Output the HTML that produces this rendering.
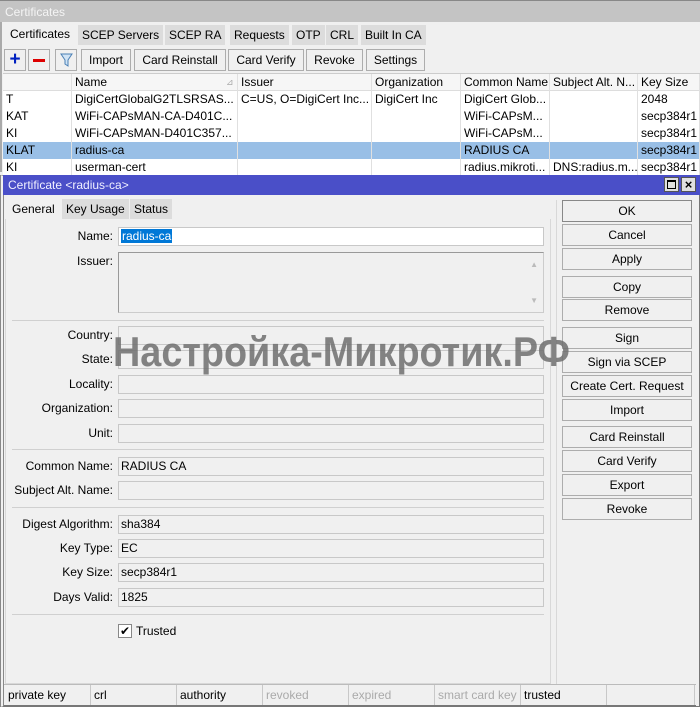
<!DOCTYPE html>
<html><head><meta charset="utf-8"><style>
*{box-sizing:border-box;margin:0;padding:0}
body{width:700px;height:707px;overflow:hidden;background:#f0f0f0;font-family:"Liberation Sans",sans-serif;font-size:12px;color:#000;position:relative}
.a{position:absolute}
.tab{position:absolute;top:25px;height:20px;background:#dcdcdc;padding:3px 4px 0;font-size:12px}
.tb{position:absolute;top:49px;height:22px;border:1px solid #adadad;background:#f0f0f0;text-align:center;line-height:20px}
.cell{position:absolute;height:17px;line-height:17px;padding-left:3px;white-space:nowrap;overflow:hidden;border-right:1px solid #e0e0e0}
.lbl{position:absolute;right:587px;text-align:right;height:18px;line-height:18px}
.inp{position:absolute;left:118px;width:426px;height:19px;border:1px solid #c8c8c8;background:#f0f0f0;line-height:17px;padding-left:2px}
.sep{position:absolute;left:12px;width:532px;height:1px;background:#d0d0d0}
.btn{position:absolute;left:562px;width:130px;height:22px;border:1px solid #adadad;background:#f0f0f0;text-align:center;line-height:20px}
.st{position:absolute;top:685px;height:20px;line-height:20px;padding-left:3px;border-right:1px solid #c8c8c8}
</style></head><body>
<div class="a" style="left:0;top:0;width:700px;height:22px;background:#c4c4c4;border-top:1px solid #888;color:#f4f4f4;padding:4px 0 0 5px;font-size:12px">Certificates</div>
<div class="a" style="left:0;top:22px;width:2px;height:150px;background:#aaa"></div>
<div class="tab" style="left:4px;top:23px;height:22px;background:#f0f0f0;padding-top:4px;left:6px">Certificates</div>
<div class="tab" style="left:78px">SCEP Servers</div>
<div class="tab" style="left:165px">SCEP RA</div>
<div class="tab" style="left:230px">Requests</div>
<div class="tab" style="left:292px">OTP</div>
<div class="tab" style="left:326px">CRL</div>
<div class="tab" style="left:361px">Built In CA</div>
<div class="tb" style="left:4px;width:22px"><span style="color:#0020c0;font-weight:bold;font-size:19px;line-height:19px">+</span></div>
<div class="tb" style="left:28px;width:22px"><div class="a" style="left:4px;top:9px;width:12px;height:3px;background:#d00"></div></div>
<div class="tb" style="left:55px;width:22px"><svg class="a" style="left:4px;top:3px" width="13" height="14"><path d="M1 1h11L8 7v6L5 11V7z" fill="#cfe3f5" stroke="#4a7fb5"/></svg></div>
<div class="tb" style="left:81px;width:50px">Import</div>
<div class="tb" style="left:134px;width:92px">Card Reinstall</div>
<div class="tb" style="left:228px;width:76px">Card Verify</div>
<div class="tb" style="left:306px;width:57px">Revoke</div>
<div class="tb" style="left:366px;width:59px">Settings</div>
<div class="a" style="left:3px;top:73px;width:697px;height:102px;background:#fff;border-top:1px solid #ccc"></div>
<div class="a" style="left:3px;top:74px;width:697px;height:17px;background:#f6f6f6;border-bottom:1px solid #ddd"></div>
<div class="a" style="left:3px;top:142px;width:697px;height:17px;background:#99bfe6"></div>
<div class="cell" style="left:3px;top:74px;width:69px"></div>
<div class="cell" style="left:72px;top:74px;width:166px">Name<span style="position:absolute;left:154px;color:#aaa;font-size:9px">&#8895;</span></div>
<div class="cell" style="left:238px;top:74px;width:134px">Issuer</div>
<div class="cell" style="left:372px;top:74px;width:89px">Organization</div>
<div class="cell" style="left:461px;top:74px;width:89px">Common Name</div>
<div class="cell" style="left:550px;top:74px;width:88px">Subject Alt. N...</div>
<div class="cell" style="left:638px;top:74px;width:62px">Key Size</div>

<div class="cell" style="left:3px;top:91px;width:69px">T</div><div class="cell" style="left:72px;top:91px;width:166px">DigiCertGlobalG2TLSRSAS...</div><div class="cell" style="left:238px;top:91px;width:134px">C=US, O=DigiCert Inc...</div><div class="cell" style="left:372px;top:91px;width:89px">DigiCert Inc</div><div class="cell" style="left:461px;top:91px;width:89px">DigiCert Glob...</div><div class="cell" style="left:550px;top:91px;width:88px"></div><div class="cell" style="left:638px;top:91px;width:62px">2048</div>
<div class="cell" style="left:3px;top:108px;width:69px">KAT</div><div class="cell" style="left:72px;top:108px;width:166px">WiFi-CAPsMAN-CA-D401C...</div><div class="cell" style="left:238px;top:108px;width:134px"></div><div class="cell" style="left:372px;top:108px;width:89px"></div><div class="cell" style="left:461px;top:108px;width:89px">WiFi-CAPsM...</div><div class="cell" style="left:550px;top:108px;width:88px"></div><div class="cell" style="left:638px;top:108px;width:62px">secp384r1</div>
<div class="cell" style="left:3px;top:125px;width:69px">KI</div><div class="cell" style="left:72px;top:125px;width:166px">WiFi-CAPsMAN-D401C357...</div><div class="cell" style="left:238px;top:125px;width:134px"></div><div class="cell" style="left:372px;top:125px;width:89px"></div><div class="cell" style="left:461px;top:125px;width:89px">WiFi-CAPsM...</div><div class="cell" style="left:550px;top:125px;width:88px"></div><div class="cell" style="left:638px;top:125px;width:62px">secp384r1</div>
<div class="cell" style="left:3px;top:142px;width:69px">KLAT</div><div class="cell" style="left:72px;top:142px;width:166px">radius-ca</div><div class="cell" style="left:238px;top:142px;width:134px"></div><div class="cell" style="left:372px;top:142px;width:89px"></div><div class="cell" style="left:461px;top:142px;width:89px">RADIUS CA</div><div class="cell" style="left:550px;top:142px;width:88px"></div><div class="cell" style="left:638px;top:142px;width:62px">secp384r1</div>
<div class="cell" style="left:3px;top:159px;width:69px">KI</div><div class="cell" style="left:72px;top:159px;width:166px">userman-cert</div><div class="cell" style="left:238px;top:159px;width:134px"></div><div class="cell" style="left:372px;top:159px;width:89px"></div><div class="cell" style="left:461px;top:159px;width:89px">radius.mikroti...</div><div class="cell" style="left:550px;top:159px;width:88px">DNS:radius.m...</div><div class="cell" style="left:638px;top:159px;width:62px">secp384r1</div>

<div class="a" style="left:0;top:175px;width:700px;height:532px;background:#f0f0f0;border:1px solid #777;border-left:4px double #888"></div>
<div class="a" style="left:3px;top:175px;width:697px;height:20px;background:#4a4fc8;color:#f0f0ff;padding:3px 0 0 5px">Certificate &lt;radius-ca&gt;</div>
<div class="a" style="left:664px;top:177px;width:15px;height:15px;background:#e0e0e0;border:1px solid #555"><div class="a" style="left:2px;top:2px;width:9px;height:9px;border:1px solid #000;border-top-width:2px"></div></div>
<div class="a" style="left:681px;top:177px;width:15px;height:15px;background:#e0e0e0;border:1px solid #555;text-align:center;line-height:13px;font-size:13px;font-weight:bold">×</div>
<div class="tab" style="left:8px;top:198px;height:22px;background:#f0f0f0;padding-top:4px">General</div>
<div class="tab" style="left:62px;top:199px">Key Usage</div>
<div class="tab" style="left:130px;top:199px">Status</div>
<div class="a" style="left:5px;top:219px;width:546px;height:465px;border:1px solid #d8d8d8;border-top:none"></div>

<div class="lbl" style="top:227px">Name:</div>
<div class="inp" style="top:227px;background:#fff"><span style="background:#0078d7;color:#fff;padding:0 1px">radius-ca</span></div>
<div class="lbl" style="top:252px">Issuer:</div>
<div class="inp" style="top:252px;height:61px;border-color:#999 #ccc #ccc #999"><span class="a" style="right:5px;top:3px;color:#bbb;font-size:8px">▲</span><span class="a" style="right:5px;bottom:3px;color:#bbb;font-size:8px">▼</span></div>
<div class="sep" style="top:320px"></div>
<div class="lbl" style="top:326px">Country:</div><div class="inp" style="top:326px"></div>
<div class="lbl" style="top:350px">State:</div><div class="inp" style="top:350px"></div>
<div class="lbl" style="top:375px">Locality:</div><div class="inp" style="top:375px"></div>
<div class="lbl" style="top:399px">Organization:</div><div class="inp" style="top:399px"></div>
<div class="lbl" style="top:424px">Unit:</div><div class="inp" style="top:424px"></div>
<div class="sep" style="top:449px"></div>
<div class="lbl" style="top:457px">Common Name:</div><div class="inp" style="top:457px">RADIUS CA</div>
<div class="lbl" style="top:481px">Subject Alt. Name:</div><div class="inp" style="top:481px"></div>
<div class="sep" style="top:507px"></div>
<div class="lbl" style="top:515px">Digest Algorithm:</div><div class="inp" style="top:515px">sha384</div>
<div class="lbl" style="top:539px">Key Type:</div><div class="inp" style="top:539px">EC</div>
<div class="lbl" style="top:563px">Key Size:</div><div class="inp" style="top:563px">secp384r1</div>
<div class="lbl" style="top:588px">Days Valid:</div><div class="inp" style="top:588px">1825</div>
<div class="sep" style="top:614px"></div>
<div class="a" style="left:118px;top:624px;width:14px;height:14px;background:#fff;border:1px solid #888;font-size:12px;line-height:12px;text-align:center">✔</div>
<div class="a" style="left:136px;top:624px">Trusted</div>

<div class="btn" style="top:200px;border-color:#888">OK</div>
<div class="btn" style="top:224px">Cancel</div>
<div class="btn" style="top:248px">Apply</div>
<div class="btn" style="top:276px">Copy</div>
<div class="btn" style="top:299px">Remove</div>
<div class="btn" style="top:327px">Sign</div>
<div class="btn" style="top:351px">Sign via SCEP</div>
<div class="btn" style="top:375px">Create Cert. Request</div>
<div class="btn" style="top:399px">Import</div>
<div class="btn" style="top:426px">Card Reinstall</div>
<div class="btn" style="top:450px">Card Verify</div>
<div class="btn" style="top:474px">Export</div>
<div class="btn" style="top:498px">Revoke</div>
<div class="a" style="left:556px;top:200px;width:1px;height:484px;background:#d8d8d8"></div>

<div class="a" style="left:113px;top:327px;font-size:42px;font-weight:bold;color:rgba(110,110,110,0.85);white-space:nowrap;line-height:50px;transform:scaleX(0.9);transform-origin:0 0">Настройка-Микротик.РФ</div>

<div class="a" style="left:4px;top:684px;width:692px;height:22px;border-top:1px solid #bbb;border-bottom:1px solid #777"></div>
<div class="st" style="left:5px;width:86px">private key</div>
<div class="st" style="left:91px;width:86px">crl</div>
<div class="st" style="left:177px;width:86px">authority</div>
<div class="st" style="left:263px;width:86px;color:#aaa">revoked</div>
<div class="st" style="left:349px;width:86px;color:#aaa">expired</div>
<div class="st" style="left:435px;width:86px;color:#aaa">smart card key</div>
<div class="st" style="left:521px;width:86px">trusted</div>
<div class="st" style="left:607px;width:88px"></div>
</body></html>
